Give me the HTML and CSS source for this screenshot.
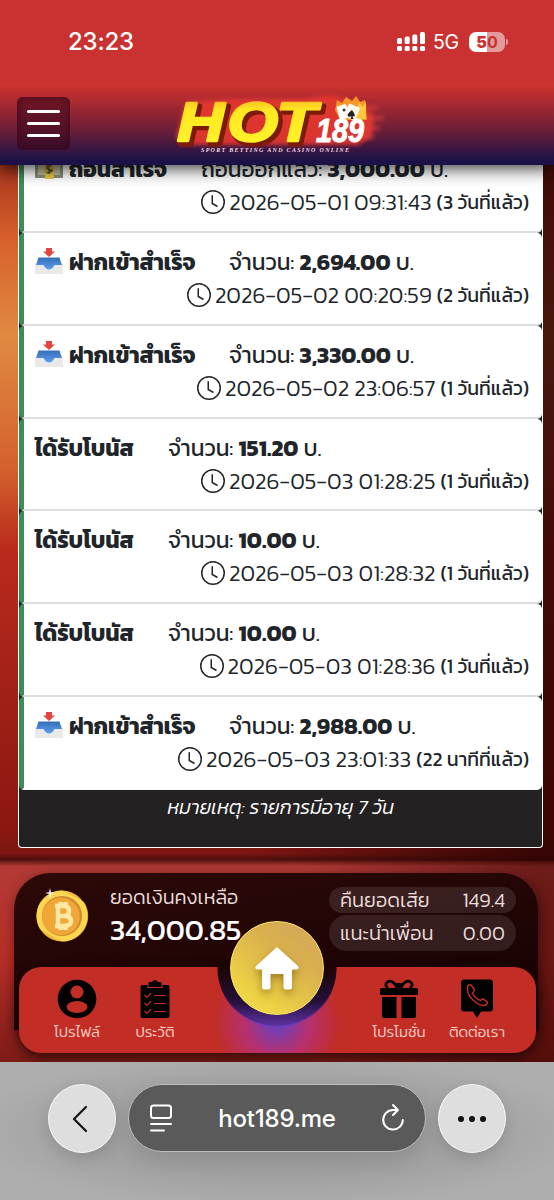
FILE: index.html
```html
<!DOCTYPE html>
<html lang="th">
<head>
<meta charset="utf-8">
<title>HOT189</title>
<link rel="stylesheet" href="styles.css">
</head>
<body>
<svg width="0" height="0" class="defs">
  <defs>
    <linearGradient id="tray" x1="0" y1="0" x2="0" y2="1"><stop offset="0" stop-color="#376db5"/><stop offset="1" stop-color="#5b9df0"/></linearGradient>
    <linearGradient id="fire" x1="0" y1="0" x2="0" y2="1"><stop offset="0" stop-color="#f5a32b"/><stop offset=".3" stop-color="#ffe81f"/><stop offset=".8" stop-color="#fff12a"/><stop offset="1" stop-color="#ffae18"/></linearGradient>
    <filter id="soft" x="-20%" y="-40%" width="140%" height="180%"><feGaussianBlur stdDeviation="2.2"/></filter>
  </defs>
  <symbol id="inbox" viewBox="0 0 28 28">
    <path d="M2 16H26L28 18V27H0V18Z" fill="#e9e9ea"/>
    <path d="M3.500 10.500H24.500L27 18H19.500Q17 22.500 14 22.500T8.500 18H1Z" fill="url(#tray)"/>
    <path d="M11 1H17V4.500H20L14 10L8 4.500H11Z" fill="#e0483f"/>
  </symbol>
  <symbol id="clock" viewBox="0 0 16 16">
    <circle cx="8" cy="8" r="7.500"/><path d="M7.500 3.500V9L11 11"/>
  </symbol>
</svg>

<div class="status">
  <span class="time">23:23</span>
  <svg class="signal" width="28" height="20" viewBox="0 0 28 20" fill="#fff"><rect x="0" y="6" width="5" height="6" rx="1.500"/><rect x="7.700" y="4.500" width="5" height="7.500" rx="1.500"/><rect x="15.300" y="2.500" width="5" height="9.500" rx="1.500"/><rect x="23" y="0" width="5" height="12" rx="1.500"/><rect x="0" y="14" width="5" height="5" rx="1.500"/><rect x="7.700" y="14" width="5" height="5" rx="1.500"/><rect x="15.300" y="14" width="5" height="5" rx="1.500"/><rect x="23" y="14" width="5" height="5" rx="1.500"/></svg>
  <span class="net">5G</span>
  <span class="battery"><b>5</b><i>0</i></span>
  <span class="nub"></span>
</div>

<header class="top">
  <div class="burger"><i></i><i></i><i></i></div>
  <svg class="logo" width="214" height="64" viewBox="0 0 214 64">
    <path d="M14 10L60 7L130 7L160 3L188 12L202 24L200 44L186 53L8 53L4 44Z" fill="#e8382d" opacity=".9" filter="url(#soft)"/>
    <path d="M180 16H206M186 26H212M184 36H208M182 45H202" stroke="#e2443c" stroke-width="5" opacity=".55" filter="url(#soft)"/>
    <path d="M163 18L165 8L170 11L174 5L180 9L184 4L188 10L193 8L195 28H168Z" fill="#f7942a"/>
    <path d="M184 22L187 10L191 15L194 9L194 27H184Z" fill="#ffc83c"/>
    <rect x="166" y="13" width="10" height="14" rx="1.500" fill="#fff" transform="rotate(-15 171 20)"/>
    <rect x="174" y="13" width="12" height="14" rx="1.500" fill="#fff7ec" transform="rotate(22 180 20)"/>
    <path d="M180 18q-7 5-3 7l2.500-1-1 3h3l-1-3q5 2-.5-6z" fill="#222"/>
    <circle cx="172" cy="18" r="1.500" fill="#333"/>
    <g transform="scale(1.18 1)"><text class="hot-side" x="7 49.500 91" y="52">HOT</text><text class="hot-face" x="4.500 47 88.500" y="49.500">HOT</text></g>
    <text class="num" x="144" y="50" textLength="48" lengthAdjust="spacingAndGlyphs">189</text>
    <text class="tag" x="29" y="59.500" textLength="148">SPORT BETTING AND CASINO ONLINE</text>
  </svg>
</header>

<main class="page">
  <section class="list">
    <article class="row">
      <div class="line"><span class="kind out"><svg class="ico" width="28" height="28" viewBox="0 0 28 28"><rect y="7" width="28" height="17" fill="#8c8f73"/><rect x="3" y="9" width="22" height="12" fill="#bcbc9c"/><rect x="10" y="7" width="9" height="18" fill="#e5c64d"/><circle cx="14" cy="15" r="5" fill="#c9a93b"/><path d="M16.500 12Q12 10 12 13T16 16T11.500 19M14 10V20" fill="none" stroke="#4b4930" stroke-width="1.300"/></svg><b>ถอนสำเร็จ</b></span><span class="amt">ถอนออกแล้ว: <b>3,000.00</b> บ.</span></div>
      <div class="when"><svg width="24" height="24"><use href="#clock"/></svg><span>2026-05-01 09:31:43</span><small>(3 วันที่แล้ว)</small></div>
    </article>
    <article class="row">
      <div class="line"><span class="kind dep"><svg class="ico" width="28" height="28"><use href="#inbox"/></svg><b>ฝากเข้าสำเร็จ</b></span><span class="amt">จำนวน: <b>2,694.00</b> บ.</span></div>
      <div class="when"><svg width="24" height="24"><use href="#clock"/></svg><span>2026-05-02 00:20:59</span><small>(2 วันที่แล้ว)</small></div>
    </article>
    <article class="row">
      <div class="line"><span class="kind dep"><svg class="ico" width="28" height="28"><use href="#inbox"/></svg><b>ฝากเข้าสำเร็จ</b></span><span class="amt">จำนวน: <b>3,330.00</b> บ.</span></div>
      <div class="when"><svg width="24" height="24"><use href="#clock"/></svg><span>2026-05-02 23:06:57</span><small>(1 วันที่แล้ว)</small></div>
    </article>
    <article class="row">
      <div class="line"><span class="kind"><b>ได้รับโบนัส</b></span><span class="amt">จำนวน: <b>151.20</b> บ.</span></div>
      <div class="when"><svg width="24" height="24"><use href="#clock"/></svg><span>2026-05-03 01:28:25</span><small>(1 วันที่แล้ว)</small></div>
    </article>
    <article class="row">
      <div class="line"><span class="kind"><b>ได้รับโบนัส</b></span><span class="amt">จำนวน: <b>10.00</b> บ.</span></div>
      <div class="when"><svg width="24" height="24"><use href="#clock"/></svg><span>2026-05-03 01:28:32</span><small>(1 วันที่แล้ว)</small></div>
    </article>
    <article class="row">
      <div class="line"><span class="kind"><b>ได้รับโบนัส</b></span><span class="amt">จำนวน: <b>10.00</b> บ.</span></div>
      <div class="when"><svg width="24" height="24"><use href="#clock"/></svg><span>2026-05-03 01:28:36</span><small>(1 วันที่แล้ว)</small></div>
    </article>
    <article class="row last">
      <div class="line"><span class="kind dep"><svg class="ico" width="28" height="28"><use href="#inbox"/></svg><b>ฝากเข้าสำเร็จ</b></span><span class="amt">จำนวน: <b>2,988.00</b> บ.</span></div>
      <div class="when"><svg width="24" height="24"><use href="#clock"/></svg><span>2026-05-03 23:01:33</span><small>(22 นาทีที่แล้ว)</small></div>
    </article>
    <p class="note">หมายเหตุ: รายการมีอายุ 7 วัน</p>
  </section>

  <nav class="dock">
    <div class="wallet">
      <svg class="coin" width="54" height="54" viewBox="0 0 54 54"><circle cx="26" cy="27" r="25.500" fill="#f0bd3c"/><path d="M4 40A25.500 25.500 0 0 1 26 1.500L48 13A25.500 25.500 0 0 1 26 52.500Z" fill="#ffdf58" opacity=".75"/><circle cx="26" cy="27" r="20" fill="#cf8a2f"/><circle cx="25" cy="27.500" r="18.800" fill="#efa838"/><g fill="none" stroke="#ffe8a4" stroke-width="4.500"><path d="M22 17V37M19 17H28Q33 17 33 22T28 27H22M28 27Q35 27 35 32T28 37H19M24.500 13V17M29.500 13V17M24.500 37V41M29.500 37V41"/></g><path d="M14-1L15 3L19 4L15 5L14 10L13 5L9 4L13 3Z" fill="#fff" opacity=".85"/></svg>
      <div class="balance"><span class="cap">ยอดเงินคงเหลือ</span><span class="money">34,000.85</span></div>
      <div class="pills"><div class="pill p1"><span>คืนยอดเสีย</span><span>149.4</span></div><div class="pill p2"><span>แนะนำเพื่อน</span><span>0.00</span></div></div>
    </div>
    <div class="tabs">
      <a class="tab"><svg width="40" height="40" viewBox="0 0 40 40"><circle cx="20" cy="20" r="19.300"/><circle cx="20" cy="13" r="6.500" fill="#c22d25"/><ellipse cx="20" cy="28" rx="10.500" ry="6" fill="#c22d25"/></svg><span>โปรไฟล์</span></a>
      <a class="tab"><svg width="40" height="40" viewBox="0 0 40 40"><path d="M7.500 6H13.500V4Q13.500 3 15 3H17Q20-1 23 3H25Q26.500 3 26.500 4V6H33Q34.500 6 34.500 8V37Q34.500 39 33 39H7Q5.500 39 5.500 37V8Q5.500 6 7.500 6Z"/><path d="M13 6.500V8.500H27V6.500M9.500 16L12 18.500L16 14M9.500 24L12 26.500L16 22M9.500 32L12 34.500L16 30M19 16.500H31M19 24.500H31M19 32.500H31" fill="none" stroke="#c22d25" stroke-width="1.200"/></svg><span>ประวัติ</span></a>
      <a class="tab promo"><svg width="40" height="40" viewBox="0 0 40 40"><rect x="1" y="9" width="38" height="7" rx="1.500"/><path d="M3 18H17.500V39H5Q3 39 3 37ZM22.500 18H37V37Q37 39 35 39H22.500Z"/><path d="M18 8Q13 0 8.500 3Q5 6 9 9M22 8Q27 0 31.500 3Q35 6 31 9" fill="none" stroke="#000" stroke-width="2.800"/><rect x="16" y="4" width="8" height="6" rx="2"/></svg><span>โปรโมชั่น</span></a>
      <a class="tab"><svg width="40" height="40" viewBox="0 0 40 40"><path d="M7 .5H33Q36 .5 36 4V29Q36 32.500 33 32.500H24L20 39L16 32.500H7Q4 32.500 4 29V4Q4 .5 7 .5Z"/><path d="M11 6.500Q13 5 14.500 6.500L17.500 10.500Q18 12 15.500 14Q18 19.500 23.500 21.500Q25 19.500 26.500 20L30 23Q31 24.500 29 26Q23.500 28 16 21T11 6.500Z" fill="none" stroke="#c22d25" stroke-width="1.500"/></svg><span>ติดต่อเรา</span></a>
    </div>
    <div class="home"><svg width="46" height="46" viewBox="0 0 46 46" fill="#fff"><path d="M23 2L44 21Q46 24.500 42 24.500H38V42Q38 44.500 35.500 44.500H32Q29.500 44.500 29.500 42V29H16.500V42Q16.500 44.500 14 44.500H10.500Q8 44.500 8 42V24.500H4Q0 24.500 2 21Z"/></svg></div>
  </nav>
</main>

<footer class="browser">
  <span class="round"><svg width="20" height="30" viewBox="0 0 20 30"><path d="M14 3L2 15L14 27" fill="none" stroke="#111" stroke-width="2.200" stroke-linecap="round" stroke-linejoin="round"/></svg></span>
  <div class="url"><svg width="24" height="28" viewBox="0 0 24 28" fill="none" stroke="#fff" stroke-width="2" stroke-linecap="round"><rect x="2" y="1.500" width="20" height="12.500" rx="2.500"/><path d="M2 20H22M2 26.500H15"/></svg><span>hot189.me</span><svg width="24" height="30" viewBox="0 0 24 30" fill="none" stroke="#fff" stroke-width="2" stroke-linecap="round" stroke-linejoin="round"><path d="M17 7H12A9.800 9.800 0 1 0 21.800 17M12 2L17 7L12 12"/></svg></div>
  <span class="round"><svg width="28" height="8" viewBox="0 0 28 8" fill="#111"><circle cx="3" cy="4" r="3"/><circle cx="14" cy="4" r="3"/><circle cx="25" cy="4" r="3"/></svg></span>
</footer>
</body>
</html>
```
FILE: styles.css
```css
* { box-sizing: border-box; }
body { margin: 0; width: 554px; height: 1200px; overflow: hidden; display: flex; flex-direction: column; font-family: Kanit, Inter, "Noto Sans Thai", "Noto Sans", sans-serif; color: #212529; background: #c93230; }
.defs { position: absolute; }
.status { height: 83px; flex: none; position: relative; z-index: 3; display: flex; align-items: center; padding: 0 46px 0 68px; color: #fff; font-family: Inter, sans-serif; background: #c93230; }
.time { font-size: 24px; font-weight: 500; width: 329px; letter-spacing: -.2px; }
.signal { flex: none; }
.net { font-size: 19.500px; width: 27px; margin-left: 8px; letter-spacing: -.4px; }
.battery { flex: none; margin-left: 9px; width: 36px; height: 20px; border-radius: 7px; display: flex; justify-content: center; align-items: center; font-size: 16px; font-weight: 700; background: linear-gradient(90deg, #fff 50%, #e4999a 50%); color: #c93230; }
.battery i { font-style: normal; }
.nub { flex: none; width: 2px; height: 6px; margin-left: 1px; border-radius: 0 2px 2px 0; background: #e4999a; }
.top { height: 82px; flex: none; display: flex; position: relative; z-index: 2; padding: 14px 17px 0; background: linear-gradient(#cf342e, #b02b30 20%, #671d39 60%, #1d1247 94%); box-shadow: 0 4px 16px rgba(0,0,0,.75); }
.burger { width: 53px; height: 53px; border-radius: 6px; display: flex; flex-direction: column; gap: 9px; align-items: center; justify-content: center; background: rgba(60,8,28,.55); box-shadow: inset 0 0 8px rgba(50,0,20,.7); }
.burger i { width: 33px; height: 3px; border-radius: 2px; background: #fff; }
.logo { margin: -5px 0 0 102px; }
.hot-side, .hot-face { font: italic 700 55px "Liberation Sans", sans-serif; stroke-linejoin: round; }
.hot-side { fill: #7c1b0a; stroke: #7c1b0a; stroke-width: 5; }
.hot-face { fill: url(#fire); stroke: url(#fire); stroke-width: 2.6; }
.num { font: italic 800 33px "Liberation Sans", sans-serif; fill: #fff; stroke: #fff; stroke-width: 1; }
.tag { font: italic 700 6px "Liberation Serif", serif; fill: #f2dce6; }
.page { height: 897px; flex: none; overflow: hidden; padding: 0 11px 0 18px; background: linear-gradient(90deg, transparent 45%, rgba(45,3,3,.85) 96%) 0 0 / 100% 696px no-repeat, linear-gradient(90deg, transparent 55%, rgba(50,3,3,.55) 98%) 0 696px no-repeat, linear-gradient(#a5341c, #d85f2b 8%, #e08a42 19%, #d4602d 34%, #b92a1c 43%, #a52218 56%, #8b1710 74%, #7b1612 76.800%, #4c100c 77.400%, #b23a36 78.200%, #b92f29 88%, #7d1b16); }
.list { height: 708px; margin-top: -25px; border: 1px solid #fff; border-top: 0; border-radius: 0 0 4px 4px; background: #242122; }
.row { height: 92.850px; background: #fff; border-left: 5px solid #3f8b59; border-bottom: 2px solid #dfdfe1; border-radius: 5px; padding: 13px 13px 0 11px; }
.last { border-bottom-color: #fff; }
.line { display: flex; height: 32px; align-items: center; font-size: 22.600px; white-space: nowrap; }
.kind { width: 133px; flex: none; display: flex; align-items: center; gap: 6px; }
.ico { flex: none; margin-top: -2px; }
.dep { width: 194px; }
.out { width: 166px; }
.kind b, .amt b { font-weight: 700; }
.when { display: flex; height: 34px; align-items: center; justify-content: flex-end; gap: 5px; font-size: 22.600px; font-weight: 300; white-space: nowrap; }
.when svg { fill: none; stroke: #212529; stroke-width: 1; margin-right: -1px; }
.when small { font-size: 19.500px; font-weight: 400; margin-top: 1px; }
.note { margin: 2px 0 0; text-align: center; font-size: 19.700px; font-style: italic; font-weight: 300; color: #fff; }
.dock { position: relative; margin: 25px 5px 0 -4px; height: 182px; }
.wallet { height: 157px; border-radius: 36px 36px 0 0; background: linear-gradient(170deg, #2c0a08, #210505 50%, #150202); display: flex; padding: 16px 22px; color: #eadcdc; box-shadow: 2px 4px 14px rgba(0,0,0,.5); }
.coin { flex: none; overflow: visible; }
.balance { position: relative; z-index: 2; display: flex; flex-direction: column; margin: -5px 0 0 20px; width: 222px; }
.cap { font-size: 19.900px; font-weight: 300; line-height: 26px; white-space: nowrap; }
.money { font-size: 29.200px; line-height: 32px; font-weight: 400; color: #fff; margin-top: 4px; -webkit-text-stroke: .2px #fff; }
.pills { width: 187px; flex: none; margin-top: -2px; }
.pill { display: flex; justify-content: space-between; align-items: center; padding: 0 11px; background: rgba(255,255,255,.1); border-radius: 18px; font-size: 20px; font-weight: 300; white-space: nowrap; }
.p1 { height: 26px; }
.p2 { height: 36px; margin-top: 2px; }
.tabs { position: absolute; left: 5px; top: 94px; width: 517px; height: 86px; border-radius: 22px; display: flex; padding: 12px 20px 0 19px; background: linear-gradient(#210505, #24103a 45%, #5a2fa0) 199px -58px / 118px 118px no-repeat, #c22d25; background: radial-gradient(circle at 258px 1px, transparent 59px, #c22d25 60px) 0 0 no-repeat, linear-gradient(#1c0505, #24103a 40%, #6434a8 70%); box-shadow: 0 5px 12px rgba(0,0,0,.6); }
.tabs::before { content: ""; position: absolute; inset: 0; background: radial-gradient(circle at 258px 56px, rgba(105,65,200,.85) 8px, rgba(176,50,150,.65) 32px, transparent 64px); clip-path: path("M180 0H199A59 59 0 0 0 317 0H340V86H180Z"); }
.tab { width: 78px; display: flex; flex-direction: column; align-items: center; font-size: 15.100px; font-weight: 300; line-height: 25px; color: #ffd0c6; white-space: nowrap; }
.promo { margin-left: auto; }
.home { position: absolute; left: 216px; top: 48px; width: 94px; height: 94px; border-radius: 50%; background: linear-gradient(215deg, #d0a55c, #d9b04e 35%, #ecd045 75%, #f6e04f); border: 1px solid #ffe36a; display: flex; align-items: center; justify-content: center; }
.home svg { filter: drop-shadow(0 4px 4px rgba(110,75,0,.55)); }
.browser { height: 138px; flex: none; display: flex; gap: 12px; padding: 22px 48px; background: radial-gradient(ellipse at 50% 50%, #999 0, #a0a0a0 45%, #aeaeae 80%); }
.round { width: 68px; height: 69px; flex: none; border-radius: 50%; display: flex; align-items: center; justify-content: center; background: #dedede; border: 1px solid #f6f6f6; box-shadow: 0 6px 16px rgba(0,0,0,.12); }
.url { width: 298px; height: 68px; border-radius: 34px; border: 1px solid #bcbcbc; background: #5a5a5a; display: flex; align-items: center; justify-content: space-between; padding: 0 20px; color: #fff; font: 500 24px Inter, sans-serif; letter-spacing: -.2px; box-shadow: 0 8px 20px rgba(0,0,0,.1); }
```
